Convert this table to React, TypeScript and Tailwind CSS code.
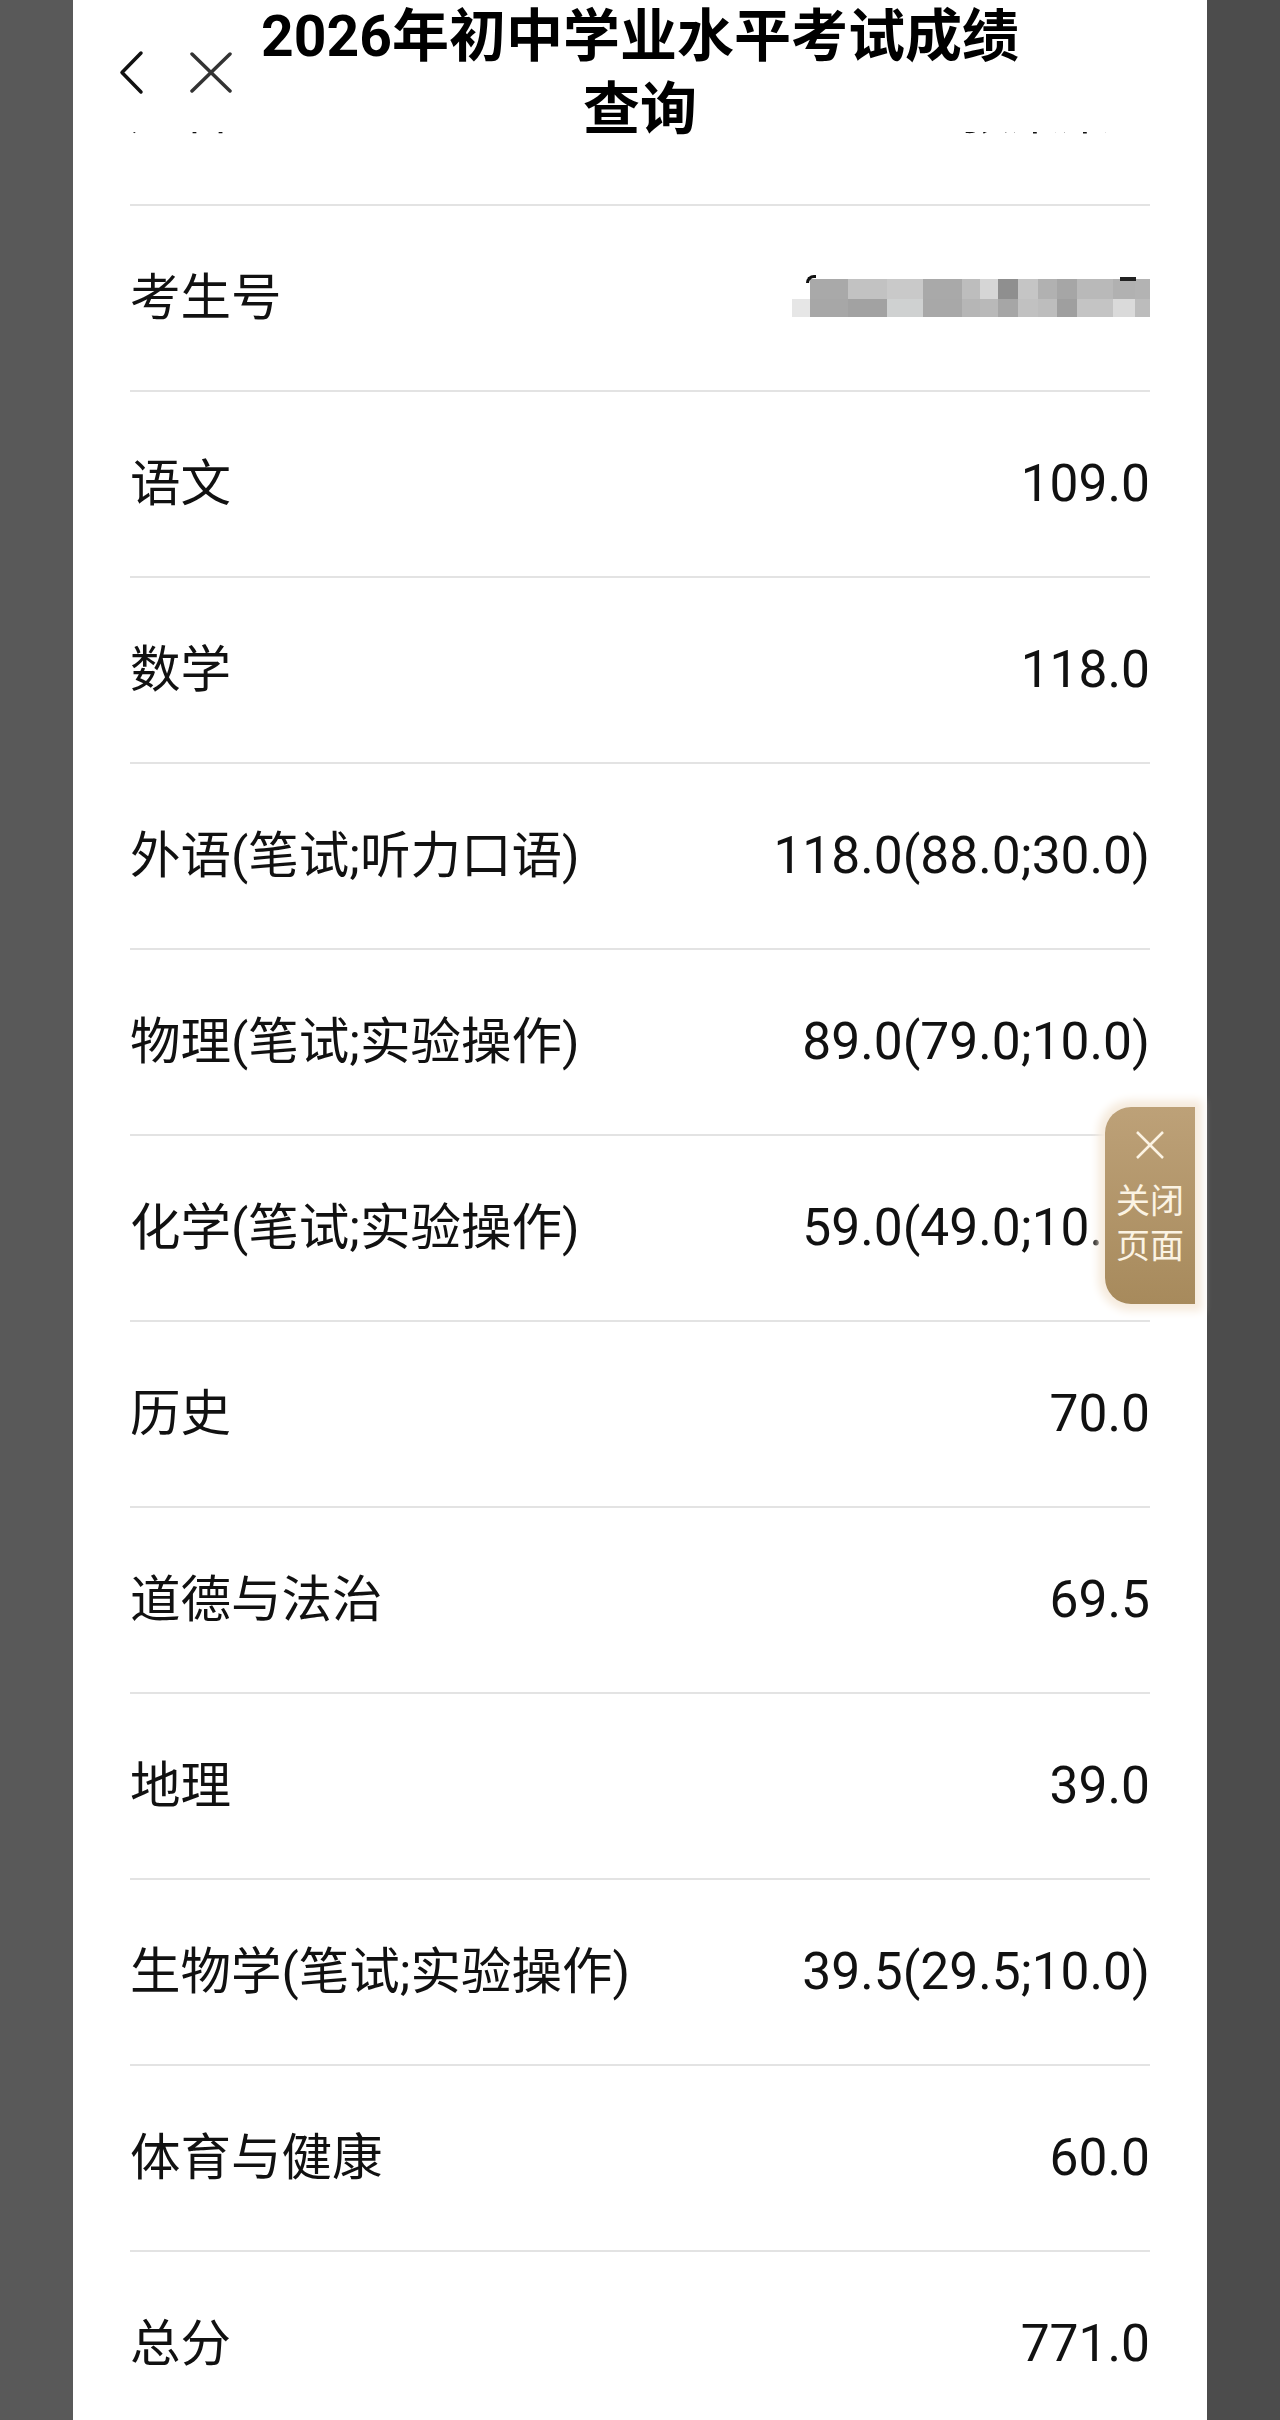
import React from "react";

const rows: { label: string; value: string; masked?: boolean }[] = [
  { label: "考生号", value: "", masked: true },
  { label: "语文", value: "109.0" },
  { label: "数学", value: "118.0" },
  { label: "外语(笔试;听力口语)", value: "118.0(88.0;30.0)" },
  { label: "物理(笔试;实验操作)", value: "89.0(79.0;10.0)" },
  { label: "化学(笔试;实验操作)", value: "59.0(49.0;10.0)" },
  { label: "历史", value: "70.0" },
  { label: "道德与法治", value: "69.5" },
  { label: "地理", value: "39.0" },
  { label: "生物学(笔试;实验操作)", value: "39.5(29.5;10.0)" },
  { label: "体育与健康", value: "60.0" },
  { label: "总分", value: "771.0" },
];

const mosaic: { w: number; top: string; bottom: string }[] = [
  { w: 38, top: "#a9a9a9", bottom: "#a7a7a7" },
  { w: 39, top: "#c2c2c2", bottom: "#a2a2a2" },
  { w: 36, top: "#c9c9c9", bottom: "#cfd1d1" },
  { w: 39, top: "#a9a9a9", bottom: "#a8a8a8" },
  { w: 18, top: "#bdbdbd", bottom: "#b6b6b6" },
  { w: 18, top: "#d6d6d6", bottom: "#b9b9b9" },
  { w: 20, top: "#8f8f8f", bottom: "#a6a6a6" },
  { w: 20, top: "#c5c5c5", bottom: "#c1c1c1" },
  { w: 19, top: "#b1b1b1", bottom: "#bdbdbd" },
  { w: 20, top: "#a6a6a6", bottom: "#9f9f9f" },
  { w: 36, top: "#b9b9b9", bottom: "#c4c4c4" },
  { w: 22, top: "#b1b1b1", bottom: "#dadada" },
  { w: 15, top: "#b3b3b3", bottom: "#bcbcbc" },
];

function MaskedNumber() {
  return (
    <div className="flex items-end">
      <div className="w-[18px] h-[18px] bg-[#e6e6e6]" />
      <div className="relative flex">
        <div className="absolute -top-[4px] -left-[4px] w-[10px] h-[8px] border-t-[3px] border-l-[3px] border-[#111] rounded-tl-[8px]" />
        <div className="absolute -top-[2px] right-[14px] w-[16px] h-[4px] bg-[#222]" />
        {mosaic.map((m, i) => (
          <div key={i} className="flex flex-col" style={{ width: m.w }}>
            <div className="h-[20px]" style={{ background: m.top }} />
            <div className="h-[18px]" style={{ background: m.bottom }} />
          </div>
        ))}
      </div>
    </div>
  );
}

export default function App() {
  return (
    <div className="w-[1280px] h-[2420px] overflow-hidden flex font-[Roboto,'Noto_Sans_CJK_SC',sans-serif] text-[#111]">
      <div className="w-[73px] shrink-0 bg-[#595959]" />
      <div className="w-[1134px] shrink-0 bg-white relative">
        {/* header */}
        <div className="h-[132px] grid grid-cols-[184px_1fr_184px] relative z-10">
          <div className="flex items-start gap-[44px] pl-[44px] pt-[50px]">
            <svg width="28" height="45" viewBox="0 0 28 45" fill="none">
              <polyline points="24,3 5,22.5 24,42" stroke="#111" strokeWidth="3.5" strokeLinecap="round" strokeLinejoin="round" />
            </svg>
            <svg width="44" height="41" viewBox="0 0 44 41" fill="none" className="mt-[2px]">
              <line x1="3" y1="2" x2="41" y2="39" stroke="#333" strokeWidth="3.5" strokeLinecap="round" />
              <line x1="41" y1="2" x2="3" y2="39" stroke="#333" strokeWidth="3.5" strokeLinecap="round" />
            </svg>
          </div>
          <div className="text-center font-bold text-[57px] leading-[73px] whitespace-nowrap text-black">
            2026年初中学业水平考试成绩
            <br />
            查询
          </div>
          <div />
        </div>

        {/* partially hidden row */}
        <div className="h-[72px] overflow-hidden px-[57px]">
          <div className="flex justify-between text-[50px] leading-[60px] -mt-[50px]">
            <span>姓名</span>
            <span className="pr-[40px]">张某某</span>
          </div>
        </div>

        {/* rows */}
        <div className="px-[57px]">
          {rows.map((r) => (
            <div
              key={r.label}
              className="h-[186px] border-t-2 border-[#e3e3e3] flex items-center justify-between leading-[60px] whitespace-nowrap"
            >
              <span className="text-[50.5px]">{r.label}</span>
              {r.masked ? <MaskedNumber /> : <span className="text-[51.5px]">{r.value}</span>}
            </div>
          ))}
        </div>

        {/* floating close button */}
        <div className="absolute left-[1032px] top-[1107px] w-[90px] h-[197px] rounded-l-[26px] bg-gradient-to-b from-[#bda178] to-[#a78a5c] shadow-[0_0_8px_7px_#f6ebdd] flex flex-col items-center pt-[23px] text-[#fbf3e3]">
          <svg width="30" height="30" viewBox="0 0 30 30" fill="none">
            <line x1="2" y1="2" x2="28" y2="28" stroke="#fbf3e3" strokeWidth="2.5" />
            <line x1="28" y1="2" x2="2" y2="28" stroke="#fbf3e3" strokeWidth="2.5" />
          </svg>
          <div className="mt-[19px] text-[34px] leading-[45px] text-center">
            关闭
            <br />
            页面
          </div>
        </div>
      </div>
      <div className="w-[73px] shrink-0 bg-[#4c4c4c]" />
    </div>
  );
}
